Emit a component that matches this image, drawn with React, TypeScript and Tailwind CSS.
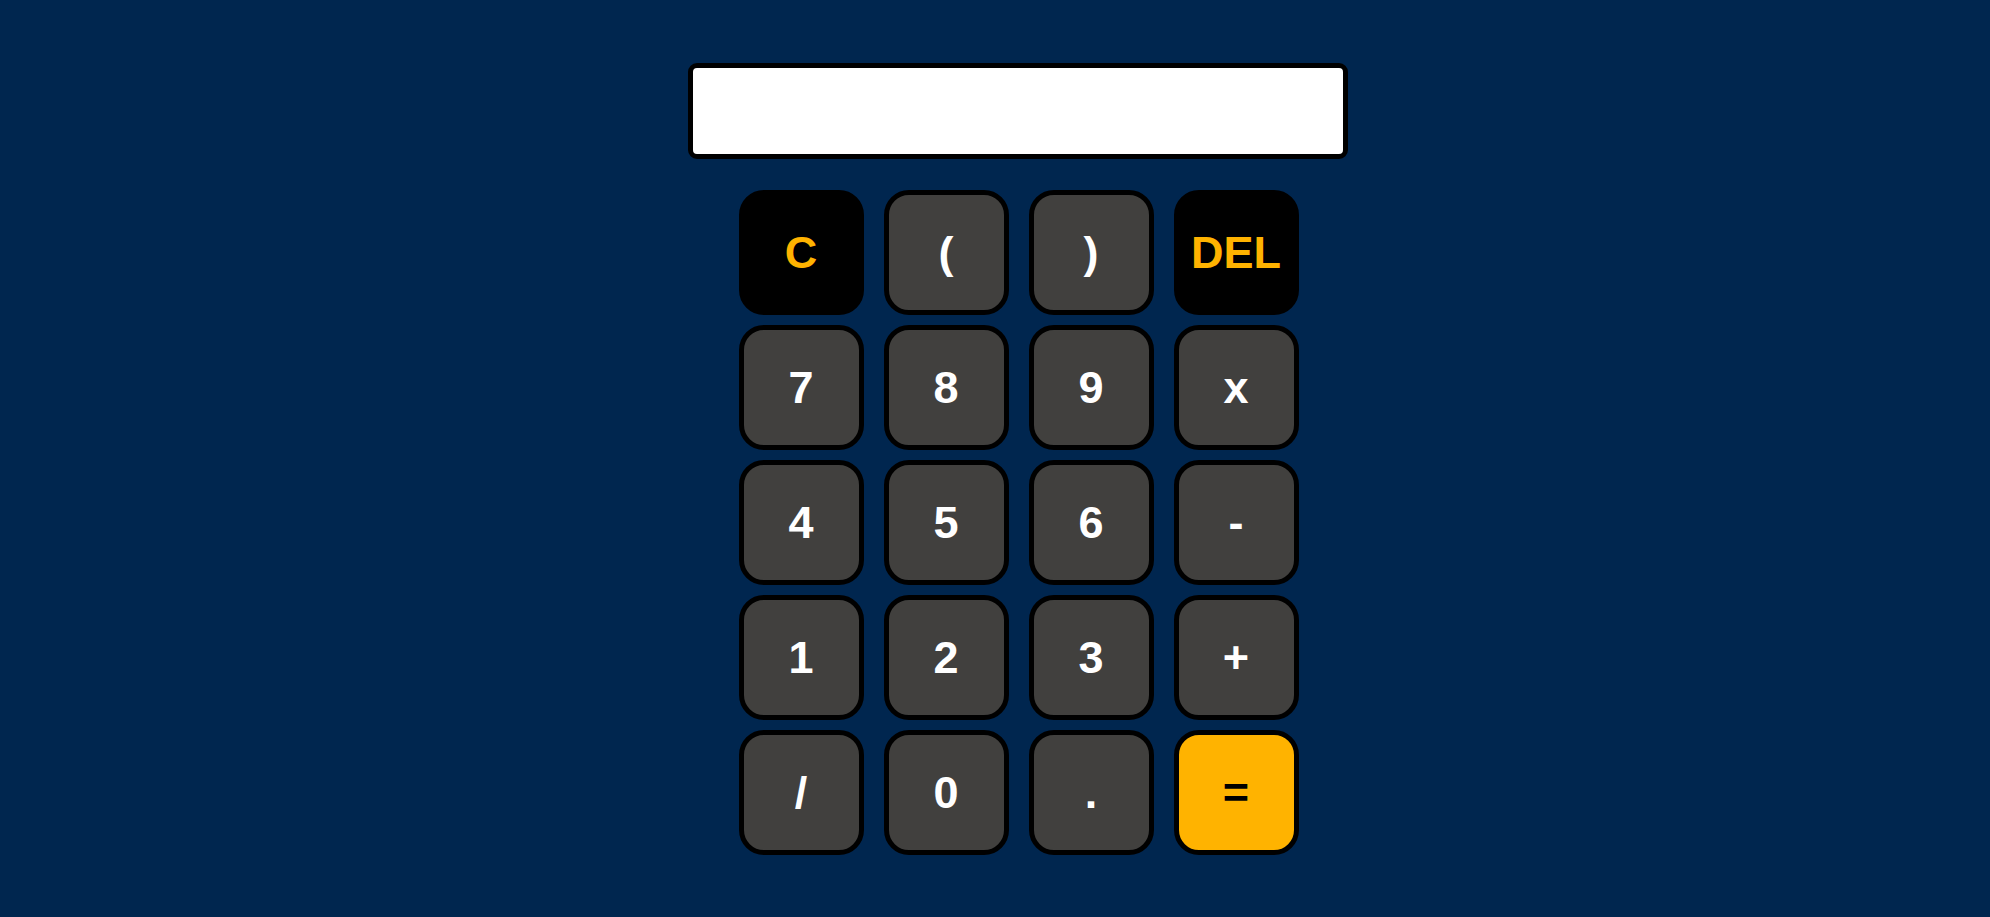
import React from 'react';

const keys: { label: string; kind: 'num' | 'dark' | 'eq' }[] = [
    { label: 'C', kind: 'dark' }, { label: '(', kind: 'num' }, { label: ')', kind: 'num' }, { label: 'DEL', kind: 'dark' },
    { label: '7', kind: 'num' }, { label: '8', kind: 'num' }, { label: '9', kind: 'num' }, { label: 'x', kind: 'num' },
    { label: '4', kind: 'num' }, { label: '5', kind: 'num' }, { label: '6', kind: 'num' }, { label: '-', kind: 'num' },
    { label: '1', kind: 'num' }, { label: '2', kind: 'num' }, { label: '3', kind: 'num' }, { label: '+', kind: 'num' },
    { label: '/', kind: 'num' }, { label: '0', kind: 'num' }, { label: '.', kind: 'num' }, { label: '=', kind: 'eq' },
];

export default function App() {
    return (
        <div className="w-full h-[917px] bg-[#00264f] flex justify-center pl-[46px] font-['Liberation_Sans',Arial,sans-serif]">
            <div className="flex flex-col items-center pt-[63px]">
                {/* display */}
                <div className="w-[660px] h-[96px] bg-white border-[5px] border-black rounded-[9px]" />

                {/* keypad */}
                <div className="grid grid-cols-4 gap-x-[20px] gap-y-[10px] mt-[31px] pl-[1px]">
                    {keys.map(k => (
                        <CalcKey key={k.label} label={k.label} kind={k.kind} />
                    ))}
                </div>
            </div>
        </div>
    );
}

function CalcKey({ label, kind }: { label: string, kind: 'num' | 'dark' | 'eq' }) {
    const look =
        kind === 'dark' ? 'bg-black text-[#ffb300]' :
        kind === 'eq' ? 'bg-[#ffb300] text-black' :
        'bg-[#41403e] text-white';
    return (
        <button className={`w-[125px] h-[125px] border-[5px] border-black rounded-[25px] flex items-center justify-center text-[45px] font-bold leading-none ${look}`}>
            {label}
        </button>
    );
}
